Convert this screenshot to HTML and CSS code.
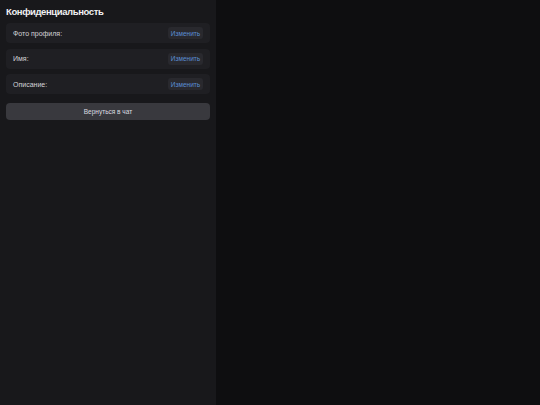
FILE: index.html
```html
<!DOCTYPE html>
<html lang="ru">
<head>
    <meta charset="UTF-8">
    <meta name="viewport" content="width=device-width, initial-scale=1.0">
    <title>Конфиденциальность</title>
    <link rel="stylesheet" href="styles.css">
</head>
<body>
    <div class="layout">
        <aside class="sidebar">
            <h2>Конфиденциальность</h2>
            <div class="setting-row">
                <span>Фото профиля:</span>
                <button class="edit-btn">Изменить</button>
            </div>
            <div class="setting-row">
                <span>Имя:</span>
                <button class="edit-btn">Изменить</button>
            </div>
            <div class="setting-row">
                <span>Описание:</span>
                <button class="edit-btn">Изменить</button>
            </div>
            <button class="back-btn">Вернуться в чат</button>
        </aside>
        <main class="chat-area"></main>
    </div>
</body>
</html>
```
FILE: styles.css
```css
body {
    font-family: "Liberation Sans", Arial, sans-serif;
    background-color: #0e0e10;
    margin: 0;
    padding: 0;
    color: #e4e4e7;
}

.layout {
    display: flex;
    height: 405px;
}

.sidebar {
    width: 204px;
    padding: 6px 6px 6px 6px;
    background-color: #18181b;
    display: flex;
    flex-direction: column;
}

.sidebar h2 {
    font-size: 9.5px;
    font-weight: bold;
    letter-spacing: -0.4px;
    line-height: 11px;
    margin: 0 0 6px 0;
    color: #f0f0f2;
}

.setting-row {
    height: 20px;
    display: flex;
    align-items: center;
    justify-content: space-between;
    padding: 0 7px;
    margin-bottom: 5.5px;
    background-color: #1f1f23;
    border-radius: 4px;
    font-size: 7px;
    color: #d4d4d8;
}

.edit-btn {
    font-family: inherit;
    font-size: 6.5px;
    color: #5b8fd6;
    background-color: #29292e;
    border: none;
    border-radius: 3px;
    height: 12px;
    width: 35px;
    padding: 0;
    cursor: pointer;
}

.back-btn {
    margin-top: 3.5px;
    height: 17px;
    width: 100%;
    font-family: inherit;
    font-size: 6.5px;
    color: #dcdce0;
    background-color: #39393e;
    border: none;
    border-radius: 4px;
    cursor: pointer;
}

.chat-area {
    flex: 1;
    background-color: #0e0e10;
}
```
